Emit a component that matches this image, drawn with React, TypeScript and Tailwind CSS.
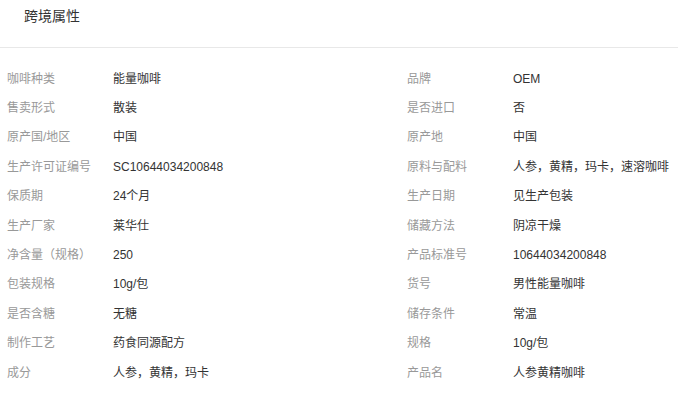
import React from "react";

const rows: [string, string, string, string][] = [
  ["咖啡种类", "能量咖啡", "品牌", "OEM"],
  ["售卖形式", "散装", "是否进口", "否"],
  ["原产国/地区", "中国", "原产地", "中国"],
  ["生产许可证编号", "SC10644034200848", "原料与配料", "人参，黄精，玛卡，速溶咖啡"],
  ["保质期", "24个月", "生产日期", "见生产包装"],
  ["生产厂家", "莱华仕", "储藏方法", "阴凉干燥"],
  ["净含量（规格）", "250", "产品标准号", "10644034200848"],
  ["包装规格", "10g/包", "货号", "男性能量咖啡"],
  ["是否含糖", "无糖", "储存条件", "常温"],
  ["制作工艺", "药食同源配方", "规格", "10g/包"],
  ["成分", "人参，黄精，玛卡", "产品名", "人参黄精咖啡"],
];

export default function App() {
  return (
    <div
      className="w-[678px] h-[396px] bg-white overflow-hidden"
      style={{ fontFamily: '"Liberation Sans", "Noto Sans CJK SC", sans-serif' }}
    >
      <div className="h-[48px] border-b border-[#e8e8e8] pl-[24px] pt-[6px] text-[14px] leading-[20px] text-[#333]">
        跨境属性
      </div>
      <div className="pt-[16px] pl-[7px] text-[12px]">
        {rows.map((r, i) => (
          <div key={i} className="flex h-[29.4px] items-center">
            <div className="w-[106px] text-[#999]">{r[0]}</div>
            <div className="w-[294px] text-[#333]">{r[1]}</div>
            <div className="w-[106px] text-[#999]">{r[2]}</div>
            <div className="text-[#333]">{r[3]}</div>
          </div>
        ))}
      </div>
    </div>
  );
}
